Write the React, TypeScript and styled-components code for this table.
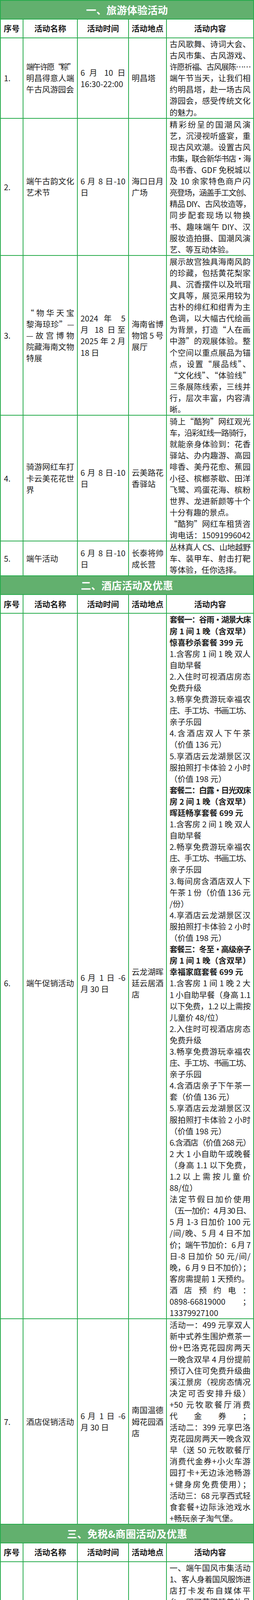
import React, { useLayoutEffect, useRef, useState } from 'react';
import styled, { createGlobalStyle } from 'styled-components';

const GREEN = '#27ab4c';
const BAND = '#62b06e';
const LINE = 29.1;

interface Row {
  no: string;
  centerNo?: boolean;
  name: string;
  time: string;
  place: string;
  content: string;
  // Word-style offsets of the four side cells
  padTop?: number;
  padBottom?: number;
  top?: boolean;
}

interface Section {
  title: string;
  rows: Row[];
}

// one visual line per text line; "|" = last line of a paragraph, "**" = bold
const sections: Section[] = [
  {
    title: '一、旅游体验活动',
    rows: [
      {
        no: '1.',
        name: `端午许愿“粽”
明昌得意人端
午古风游园会|`,
        time: `6 月 10 日
16:30-22:00|`,
        place: '明昌塔|',
        content: `古风歌舞、诗词大会、
古风市集、古风游戏、
许愿祈福、古风展陈……
端午节当天，让我们相
约明昌塔，赴一场古风
游园会，感受传统文化
的魅力。|`,
      },
      {
        no: '2.',
        name: `端午古韵文化
艺术节|`,
        time: `6 月 8 日-10
日|`,
        place: `海口日月
广场|`,
        content: `精彩纷呈的国潮风演
艺，沉浸视听盛宴，重
现古风欢潮。设置古风
市集，联合新华书店·海
岛书香、GDF 免税城以
及 10 余家特色商户闪
亮登场，涵盖手工文创、
精品 DIY、古风妆造等，
同步配套现场以物换
书、趣味端午 DIY、汉
服妆造拍摄、国潮风演
艺、等互动体验。|`,
      },
      {
        no: '3.',
        name: `“物华天宝
黎海琼珍”—
—故宫博物
院藏海南文物
特展|`,
        time: `2024 年 5
月 18 日至
2025 年 2 月
18 日|`,
        place: `海南省博
物馆 5 号
展厅|`,
        content: `展示故宫独具海南风韵
的珍藏，包括黄花梨家
具、沉香摆件以及玳瑁
文具等，展览采用较为
古朴的绯红和绀青为主
色调，以大幅古代绘画
为背景，打造“人在画
中游”的观展体验。整
个空间以重点展品为锚
点，设置“展品线”、
“文化线”、“体验线”
三条展陈线索，三线并
行，层次丰富，内容清
晰。|`,
      },
      {
        no: '4.',
        name: `骑游网红车打
卡云美花花世
界|`,
        time: `6 月 8 日-10
日|`,
        place: `云美路花
香驿站|`,
        content: `骑上“酷狗”网红观光
车，沿彩虹线一路骑行，
就能亲身体验到：花香
驿站、办内趣游、高园
啡香、美丹花愈、蕉园
小径、槟榔茶歇、田洋
飞鹭、鸡蛋花海、槟粉
世界、龙进新颜等十个
十分有趣的景点。|
“酷狗”网红车租赁咨
询电话：15091996042`,
      },
      {
        no: '5.',
        name: '端午活动|',
        time: `6 月 8 日-10
日|`,
        place: `长泰将帅
成长营|`,
        content: `丛林真人 CS、山地越野
车、装甲车、射击打靶
等体验，任你选择。|`,
      },
    ],
  },
  {
    title: '二、酒店活动及优惠',
    rows: [
      {
        no: '6.',
        padTop: 87,
        name: '端午促销活动|',
        time: `6 月 1 日 -6
月 30 日|`,
        place: `云龙湖晖
廷云居酒
店|`,
        content: `**套餐一：谷雨•湖景大床
**房 1 间 1 晚（含双早）
**惊喜秒杀套餐  399 元|
1.含客房 1 间 1 晚 双人
自助早餐|
2.入住时可视酒店房态
免费升级|
3.畅享免费游玩幸福农
庄、手工坊、书画工坊、
亲子乐园|
4.含酒店双人下午茶
（价值 136 元）|
5.享酒店云龙湖景区汉
服拍照打卡体验 2 小时
（价值 198 元）|
**套餐二：白露•日光双床
**房 2 间 1 晚（含双早）
**晖廷畅享套餐  699 元|
1.含客房 2 间 1 晚 双人
自助早餐|
2.畅享免费游玩幸福农
庄、手工坊、书画工坊、
亲子乐园|
3.每间房含酒店双人下
午茶 1 份（价值 136 元
/份）|
4.享酒店云龙湖景区汉
服拍照打卡体验 2 小时
（价值 198 元）|
**套餐三：冬至•高级亲子
**房 1 间 1 晚（含双早）
**幸福家庭套餐 699 元|
1.含客房 1 间 1 晚 2 大
1 小自助早餐（身高 1.1
以下免费，1.2 以上需按
儿童价 48/位）|
2.入住时可视酒店房态
免费升级|
3.畅享免费游玩幸福农
庄、手工坊、书画工坊、
亲子乐园|
4.含酒店亲子下午茶一
套（价值 136 元）|
5.享酒店云龙湖景区汉
服拍照打卡体验 2 小时
（价值 198 元）|
6.含酒店（价值 268 元）
2 大 1 小自助午或晚餐
（身高 1.1 以下免费，
1.2 以 上 需 按 儿 童 价
88/位）|
法定节假日加价使用
（五一加价：4 月 30 日、
5 月 1-3 日加价 100 元
/间/晚、5 月 4 日不加
价；端午节加价：6 月 7
日-8 日加价 50 元/间/
晚，6 月 9 日不加价）；
客房需提前 1 天预约。|
酒 店 预 约 电 ：
0898-66819000 ；
13379927100|`,
      },
      {
        no: '7.',
        name: '酒店促销活动|',
        time: `6 月 1 日 -6
月 30 日|`,
        place: `南国温德
姆花园酒
店|`,
        content: `活动一：499 元享双人
新中式养生围炉煮茶一
份+巴洛克花园房两天
一晚含双早 4 月份提前
预订入住可免费升级曲
溪江景房（视房态情况
决定可否安排升级）
+50 元牧歌餐厅消费
代 金 券 ；
活动二：399 元享巴洛
克花园房两天一晚含双
早（送 50 元牧歌餐厅
消费代金券+小火车游
园打卡+无边泳池畅游
+健身房免费使用）；
活动三：68 元享西式轻
食套餐+边际泳池戏水
+畅玩亲子淘气堡。|`,
      },
    ],
  },
  {
    title: '三、免税&商圈活动及优惠',
    rows: [
      {
        no: '8.',
        centerNo: true,
        top: true,
        padTop: 291,
        name: '端午免税活动|',
        time: `6 月 8 日-10
日|`,
        place: `cdf 海口
日月广场
免税店|`,
        content: `一、端午国风市集活动
1、客人身着国风服饰进
店打卡发布自媒体平
台，即可获赠精美礼品
一份；|
2、现场消费满额即可参
与传统漆扇活动。|
二、折扣活动|
进口酒水精选商品低至
6 折/满减高至 350 元；
食品百货 精选商品低
至 4 折/满减高至 200
元；|
腕表配饰精选商品低至
7 折/满返高至 300 积
分；黄金品牌 精选商品
低至 8.3 折；香化护肤
精选商品低至 5 折/满
减高至 600 元；时尚奢
品 精选商品低至 5 折/
满赠最高 3600 积分。|
*所有促销折扣以免税
价作为基准价格；部分
品牌及商品不参与，适
用规则以店内为准。|`,
      },
      {
        no: '9.',
        centerNo: true,
        name: `“阅动日月”
书香市集|`,
        time: `6 月 8 日-10
日|`,
        place: `海口日月
广场|`,
        content: `国风市集里集结 20+涵
盖手工文创、艺术精品
等业态特色商户，现场
还将叠加古风古韵、音
乐派对、趣味运动等互
动式文化体验，并首创
开 辟 “ A+B
（alcohol+Book）”文
化主题氛围，携手 cdf
及新华书店，以“书香
+酒香”创新联动模式，
落地“古韵轻 Bar”活
动内容。|`,
      },
      {
        no: '10.',
        centerNo: true,
        name: `日月广场 6 月
促销福利大放
送|`,
        time: `6 月 1 日-30
日|`,
        place: `海口日月
广场|`,
        content: `1、集结 40+精选品牌，
推出 6 月专属福利活
动：免费儿童餐、亲子
套餐 6 折起、特色轻食
第二件 6 折、免费到店
福利...详情可关注“日
月广场 MOVA” 公众
号。|
2、千份到店礼免费领：
MOVA 定制购物袋、免
费游乐体验、精选到店
礼...价值超 300 元新会
员专享礼限量领！|
3、100 积分免费赠：任
意消费满额 61 元且积
分，即可免费赠 100 积
分。|
4、华为手机免费抽：消
耗 20 积分即可参与免
费抽奖，有机会赢取华
为手机、国际香化、无
门槛霸王餐券等好礼。
数量有限，领完截止。|`,
      },
      {
        no: '11.',
        centerNo: true,
        name: `金鹿城浓情端
午·“粽”享快
乐主题活动|`,
        time: `6 月 8 日-10
日|`,
        place: '金鹿城|',
        content: `6 月 9 日 -10 日
16:00-21:30，到海口金
鹿城注册“海口金鹿城”
小程序会员即可参与
“粽”享快乐游园互动
游戏，粽子、抽纸、毛
巾、陶瓷保鲜碗等缤纷
好礼享不停，还有古风
DIY  香囊全城大放送。|`,
      },
      {
        no: '12.',
        centerNo: true,
        padBottom: 46,
        name: `金鹿城端午福
利大放送|`,
        time: `6 月 8 日-10
日|`,
        place: '金鹿城|',
        content: `1.路每家超市：①消费
满 68 元参与套圈活动
（奖品：金龙鱼 5 升花
生油、粽子等其他奖
品）；②全场品牌粽子
8.5 折；|
2.半天妖烤鱼：79 元双
人烤鱼套餐；|
3.豪享来：29.9 元牛排
上市，不含自助，要含
自助在加 6 元（加企业
微信可以送薯条一份）；
4. 疍姐海鲜糟粕醋火
锅：68 代 100 元代金
券（午市），88 代 100
元代金券（晚市）；|
5. 星枫咖啡：招牌烤鱼
套餐 51.8 元/套，配：
米饭 3 碗，例汤/星枫红
茶/星枫绿茶 3 杯任选
三；|
6. 北宇健身房：10 个
月会员卡 980 元，双人
包月私教 5200 元，再
赠送 600 元运动大礼
包；|
7. 藤野造型：29.9 元
单人设计师洗剪吹，
156 元烫染直套餐三
选一；|
8. 视野联行：防蓝光眼
镜套餐 88 元起；|
9. 九号桌球：58 元麻
将包厢畅打 4 小时+
冷饮 2 杯 39.8 元乔
氏 Q7 台球 2 小时+
冷饮 2 杯。|`,
      },
      {
        no: '13',
        centerNo: true,
        name: `[shape of
Love 爱的形
状]西班牙艺
术花瓶 Tot
Cor Vase 海
南首展|`,
        time: `3 月 30 日-6
月 30 日周一
至 周 日
10:30-19:30
(19:00 停止
入场)|`,
        place: `海口高兴
里|`,
        content: `感受艺术家如何用心形
花瓶讲述爱的故事从不
同维度诠释对于“爱”
的理解大胆去爱!|`,
      },
    ],
  },
];

const GlobalStyle = createGlobalStyle`
  html, body {
    margin: 0;
    padding: 0;
    background: #ffffff;
  }
  body {
    font-family: "Noto Sans CJK SC", "Microsoft YaHei", "Noto Sans", sans-serif;
    color: #1d1d1d;
  }
`;

const Sheet = styled.table`
  width: 650px;
  table-layout: fixed;
  border-collapse: collapse;
  border: 2px solid ${GREEN};
  font-size: 20.4px;
  line-height: ${LINE}px;
`;

const Col = styled.col<{ $w: number }>`
  width: ${({ $w }) => $w}px;
`;

const TitleCell = styled.td`
  height: 46px;
  padding: 0;
  border: 2px solid ${GREEN};
  background: ${BAND};
  color: #ffffff;
  font-size: 26px;
  font-weight: 700;
  line-height: 46px;
  text-align: center;
  letter-spacing: 0.2px;
`;

const HeadCell = styled.th`
  height: 46px;
  padding: 0 2px;
  border: 2px solid ${GREEN};
  font-weight: 700;
  text-align: center;
  vertical-align: middle;
  color: #1a1a1a;
  white-space: nowrap;
`;

const Cell = styled.td<{ $top?: boolean; $pt?: number; $pb?: number }>`
  border: 2px solid ${GREEN};
  padding: ${({ $pt }) => $pt ?? 0}px 7px ${({ $pb }) => $pb ?? 0}px;
  vertical-align: ${({ $top }) => ($top ? 'top' : 'middle')};
`;

const NoCell = styled(Cell)<{ $center?: boolean }>`
  padding-left: ${({ $center }) => ($center ? 0 : 8)}px;
  padding-right: 0;
  text-align: ${({ $center }) => ($center ? 'center' : 'left')};
`;

const Line = styled.span<{ $last?: boolean; $bold?: boolean }>`
  display: block;
  white-space: nowrap;
  text-align: ${({ $last }) => ($last ? 'left' : 'justify')};
  text-align-last: ${({ $last }) => ($last ? 'left' : 'justify')};
  font-weight: ${({ $bold }) => ($bold ? 700 : 400)};
`;

// a line that squeezes its letter spacing when it is wider than its cell
// (Word compresses the punctuation in the original)
const FitLine = ({ text, last, bold }: { text: string; last: boolean; bold: boolean }) => {
  const ref = useRef<HTMLSpanElement>(null);
  const [squeeze, setSqueeze] = useState(0);
  useLayoutEffect(() => {
    const el = ref.current;
    if (!el) return;
    const over = el.scrollWidth - el.clientWidth;
    if (over > 0) setSqueeze((over + 1) / Math.max(1, Array.from(text).length));
  }, [text]);
  return (
    <Line
      ref={ref}
      $last={last}
      $bold={bold}
      style={squeeze ? { letterSpacing: `${-squeeze}px` } : undefined}
    >
      {text}
    </Line>
  );
};

const Lines = ({ text }: { text: string }) => (
  <>
    {text
      .trim()
      .split('\n')
      .map((raw, i) => {
        let s = raw.trim();
        const bold = s.startsWith('**');
        if (bold) s = s.slice(2);
        const last = s.endsWith('|');
        if (last) s = s.slice(0, -1);
        return <FitLine key={i} text={s} last={last} bold={bold} />;
      })}
  </>
);

const heads = ['序号', '活动名称', '活动时间', '活动地点', '活动内容'];
const widths = [58, 139, 131, 97, 223];

const DataRow = ({ row }: { row: Row }) => {
  const side = { $top: row.top, $pt: row.padTop, $pb: row.padBottom };
  return (
    <tr>
      <NoCell {...side} $center={row.centerNo}>
        {row.no}
      </NoCell>
      <Cell {...side}>
        <Lines text={row.name} />
      </Cell>
      <Cell {...side}>
        <Lines text={row.time} />
      </Cell>
      <Cell {...side}>
        <Lines text={row.place} />
      </Cell>
      <Cell>
        <Lines text={row.content} />
      </Cell>
    </tr>
  );
};

export default function App() {
  return (
    <>
      <GlobalStyle />
      <Sheet>
        <colgroup>
          {widths.map((w, i) => (
            <Col key={i} $w={w} />
          ))}
        </colgroup>
        {sections.map((sec) => (
          <tbody key={sec.title}>
            <tr>
              <TitleCell colSpan={5}>{sec.title}</TitleCell>
            </tr>
            <tr>
              {heads.map((h) => (
                <HeadCell key={h}>{h}</HeadCell>
              ))}
            </tr>
            {sec.rows.map((r) => (
              <DataRow key={r.no} row={r} />
            ))}
          </tbody>
        ))}
      </Sheet>
    </>
  );
}
